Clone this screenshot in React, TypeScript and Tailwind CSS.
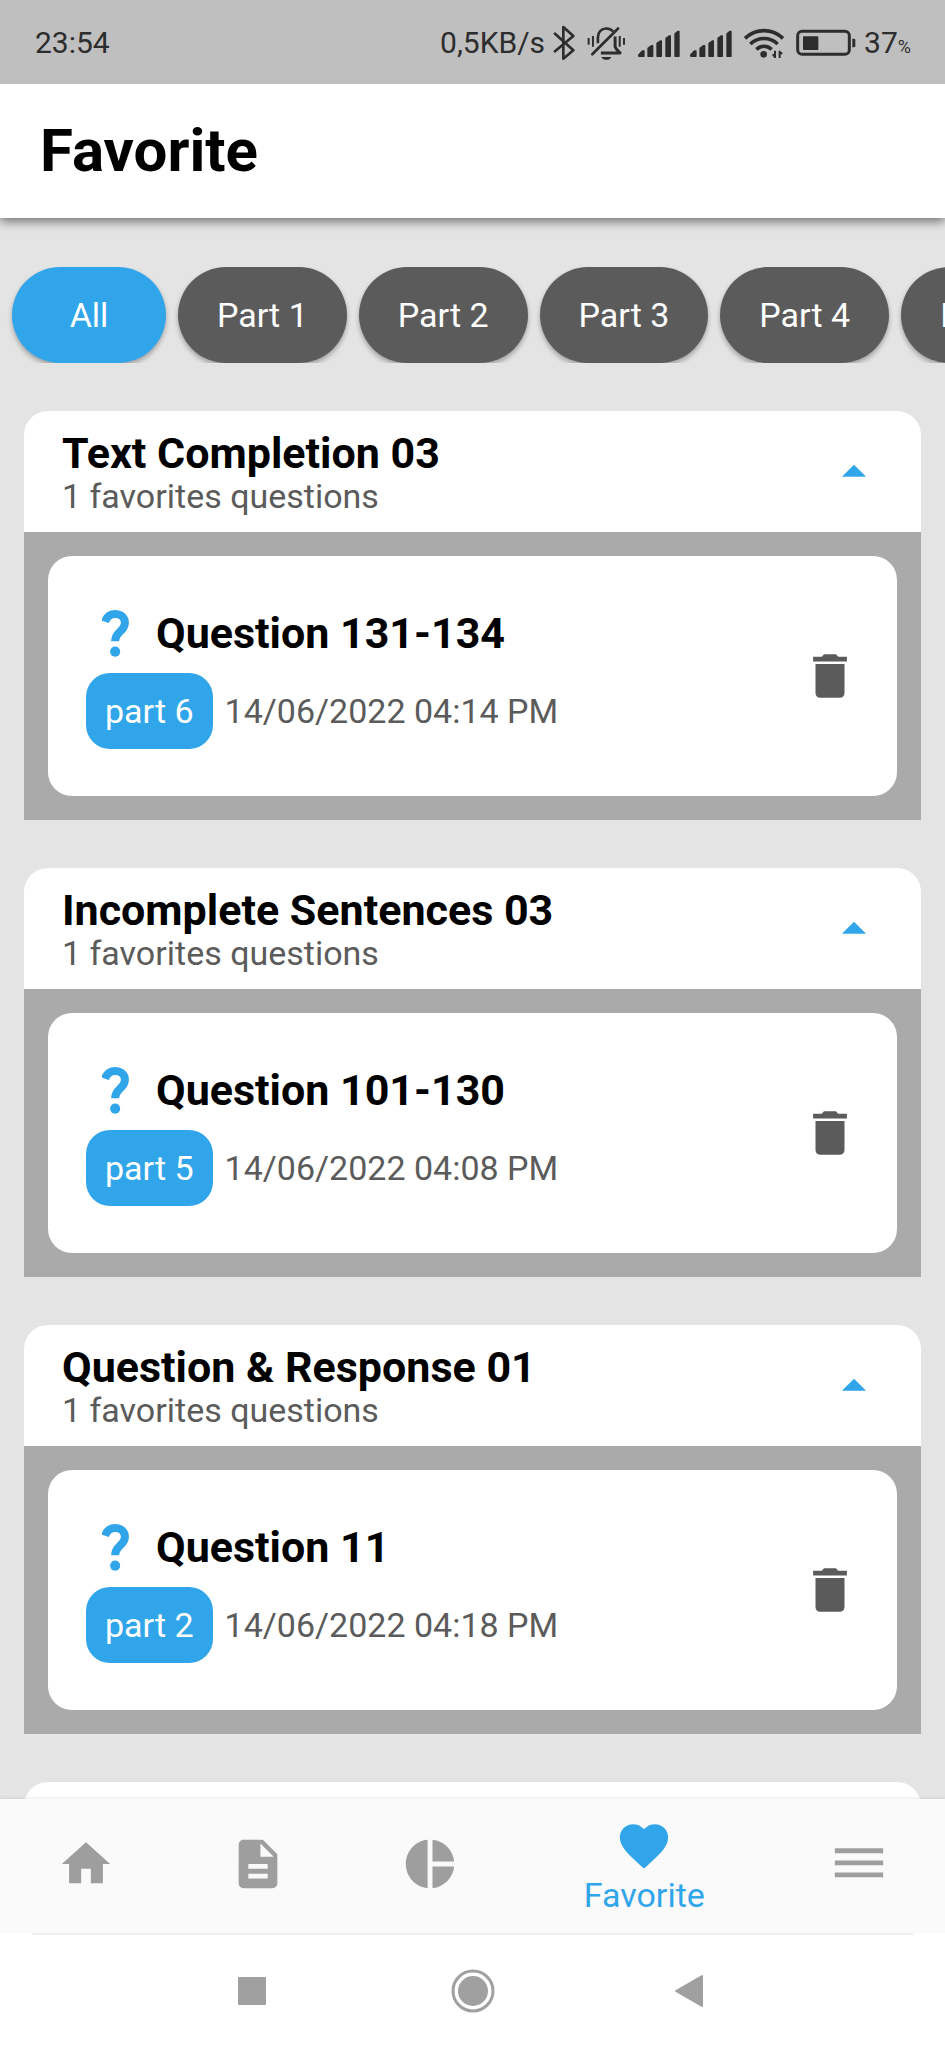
import { useState } from "react";
import type { ReactNode } from "react";
import { MdArrowDropUp, MdDescription, MdFavorite, MdHome, MdPieChart } from "react-icons/md";

type FavoriteGroup = {
  title: string;
  question: string;
  part: string;
  date: string;
};

const filters = ["All", "Part 1", "Part 2", "Part 3", "Part 4", "Part 5"];

const groups: FavoriteGroup[] = [
  { title: "Text Completion 03", question: "Question 131-134", part: "part 6", date: "14/06/2022 04:14 PM" },
  { title: "Incomplete Sentences 03", question: "Question 101-130", part: "part 5", date: "14/06/2022 04:08 PM" },
  { title: "Question & Response 01", question: "Question 11", part: "part 2", date: "14/06/2022 04:18 PM" },
];

function BluetoothIcon() {
  return (
    <svg viewBox="0 0 66 108" className="h-9 w-[22px]" fill="none" stroke="currentColor" strokeWidth="8" strokeLinecap="round" strokeLinejoin="round" aria-hidden="true">
      <path d="M6 26 61 76 31 101V6L61 33 6 79" />
    </svg>
  );
}

function MutedBellIcon() {
  return (
    <svg viewBox="0 0 118 108" className="h-9 w-[39px]" fill="none" stroke="currentColor" strokeWidth="8" aria-hidden="true">
      <path d="M5 39v20M18 33v32M99 33v32M112 39v20" strokeWidth="6" />
      <path d="M33 55V37C33 20 44 10 58 10c9 0 16 3 21 9" />
      <path d="M94 10 16 88" strokeLinecap="round" />
      <path d="M85 34v30c0 6 4 9 15 20H42" strokeWidth="9" strokeLinejoin="round" />
      <path d="M43 96h31c-4 6-8 9-15.500 9S47 102 43 96z" fill="currentColor" stroke="none" />
    </svg>
  );
}

function SignalIcon() {
  return (
    <svg viewBox="0 0 126 108" className="h-9 w-[42px]" fill="currentColor" stroke="currentColor" strokeWidth="4" strokeLinejoin="round" aria-hidden="true">
      <path d="M2 90 13 78h5v16H3zM30 70l10-8h4v32H30zM57 55l10-7h3v46H57zM84 40l9-7h4v61H84zM111 26l9-7h3v75h-12z" />
    </svg>
  );
}

function WifiIcon() {
  return (
    <svg viewBox="0 0 120 108" className="h-9 w-10" fill="none" stroke="currentColor" strokeWidth="11" aria-hidden="true">
      <path d="M3 40C36 9 84 9 117 40" />
      <path d="M19 57c24-22 58-22 82 0" />
      <path d="M37 73c14-12 32-12 46 0" />
      <circle cx="59" cy="88" r="10" fill="currentColor" stroke="none" />
      <path d="M93 77v22M107 77v22M86 88l7 8M114 87l-7-8" strokeWidth="6" />
    </svg>
  );
}

function BatteryIcon() {
  return (
    <svg viewBox="0 0 180 108" className="h-9 w-[60px]" fill="none" aria-hidden="true">
      <rect x="5" y="19" width="155" height="69" rx="13" stroke="currentColor" strokeWidth="9" />
      <rect x="21" y="34" width="46" height="41" rx="2" fill="currentColor" />
      <path d="M169 41h5q4 0 4 4v18q0 4-4 4h-5z" fill="currentColor" />
    </svg>
  );
}

function QuestionMarkIcon() {
  return (
    <svg viewBox="0 0 80 140" className="h-[47px] w-[27px]" fill="none" aria-hidden="true">
      <path d="M9 35C14 20 25 12 39 12c17 0 29 11 29 26 0 26-29 26-29 55" stroke="currentColor" strokeWidth="24" />
      <circle cx="39" cy="124" r="15" fill="currentColor" />
    </svg>
  );
}

function TrashIcon() {
  return (
    <svg viewBox="0 0 24 24" className="size-[58px]" fill="currentColor" aria-hidden="true">
      <path d="M5 4h3.500C9.200 3.800 9 3 9.900 3h4.200c.9 0 .7.8 1.400 1H19v2H5zM6 7h12v12c0 1.200-.8 2-2 2H8c-1.200 0-2-.8-2-2z" />
    </svg>
  );
}

function MenuIcon() {
  return (
    <svg viewBox="0 0 24 24" className="size-[58px]" fill="currentColor" aria-hidden="true">
      <path d="M2 5.500h20v2H2zM2 10.500h20v2H2zM2 15.500h20v2H2z" />
    </svg>
  );
}

function StatusBar() {
  return (
    <div className="z-20 flex h-[84px] shrink-0 items-center justify-between bg-[#bfbfbf] pt-[2px] pr-[34px] pl-[35px] text-[30px] leading-9 text-[#2d2d2d]">
      <span>23:54</span>
      <div className="flex items-center">
        <span>0,5KB/s</span>
        <div className="mr-2 ml-2 flex items-center gap-3">
          <BluetoothIcon />
          <MutedBellIcon />
          <div className="flex gap-[10px]">
            <SignalIcon />
            <SignalIcon />
          </div>
          <WifiIcon />
          <BatteryIcon />
        </div>
        <div className="flex items-baseline">
          <span>37</span>
          <span className="text-[18px] leading-none">%</span>
        </div>
      </div>
    </div>
  );
}

function GroupCard({ group }: { group: FavoriteGroup }) {
  const [open, setOpen] = useState(true);
  return (
    <section>
      <div className="flex h-[121px] items-center justify-between rounded-t-3xl bg-white px-[38px]">
        <div>
          <h2 className="text-[43px] leading-[52px] font-bold text-black">{group.title}</h2>
          <p className="pb-1 text-[34px] leading-[34px] text-[#5b5b5b]">1 favorites questions</p>
        </div>
        <button type="button" aria-label="Toggle questions" aria-expanded={open} onClick={() => setOpen(!open)} className="text-[#31a5ea]">
          <MdArrowDropUp className={open ? "size-[58px]" : "size-[58px] rotate-180"} />
        </button>
      </div>
      {open && (
        <div className="bg-[#aaaaaa] p-6">
          <div className="flex items-center justify-between rounded-3xl bg-white px-[38px]">
            <div className="pt-[38px] pb-[47px]">
              <div className="flex h-[79px] items-center gap-3">
                <div className="flex w-[58px] justify-center text-[#31a5ea]">
                  <QuestionMarkIcon />
                </div>
                <h3 className="pb-[2px] text-[43px] leading-[50px] font-bold text-black">{group.question}</h3>
              </div>
              <div className="flex items-center gap-3 text-[34px] leading-10">
                <span className="rounded-3xl bg-[#31a5ea] px-[19px] py-[18px] text-white">{group.part}</span>
                <span className="text-[#5b5b5b]">{group.date}</span>
              </div>
            </div>
            <button type="button" aria-label="Delete favorite" className="text-[#5b5b5b]">
              <TrashIcon />
            </button>
          </div>
        </div>
      )}
    </section>
  );
}

function NavTab({ label, children }: { label: string; children: ReactNode }) {
  return (
    <a href="#" aria-label={label} className="flex flex-[2] items-center justify-center pb-1 text-[#9e9e9e]">
      {children}
    </a>
  );
}

export default function App() {
  const [filter, setFilter] = useState("All");
  return (
    <div className="flex h-screen flex-col overflow-hidden bg-[#e4e4e4] font-['Roboto',sans-serif]">
      <StatusBar />
      <header className="z-10 shrink-0 bg-white px-10 pt-[31px] pb-[31px] shadow-[0_3px_10px_rgba(0,0,0,0.55)]">
        <h1 className="text-[60px] leading-[72px] font-bold text-black">Favorite</h1>
      </header>

      <main className="min-h-0 flex-1 overflow-y-auto pt-[49px] [scrollbar-width:none]">
        <div className="flex gap-3 overflow-x-auto px-3 [scrollbar-width:none]">
          {filters.map((name) => (
            <button
              key={name}
              type="button"
              aria-pressed={filter === name}
              onClick={() => setFilter(name)}
              className={
                filter === name
                  ? "h-24 min-w-[154px] shrink-0 rounded-full bg-[#31a5ea] px-[39px] text-[34px] leading-10 text-white shadow-[0_3px_5px_rgba(0,0,0,0.3)]"
                  : "h-24 min-w-[154px] shrink-0 rounded-full bg-[#5b5b5b] px-[39px] text-[34px] leading-10 text-white shadow-[0_3px_5px_rgba(0,0,0,0.3)]"
              }
            >
              {name}
            </button>
          ))}
        </div>
        <div className="flex flex-col gap-12 px-6 py-12">
          {groups.map((group) => (
            <GroupCard key={group.title} group={group} />
          ))}
          <div className="h-[121px] rounded-t-3xl bg-white" />
        </div>
      </main>

      <nav className="z-10 flex h-[134px] shrink-0 bg-[#fafafa] shadow-[0_0_4px_rgba(0,0,0,0.12)]">
        <NavTab label="Home">
          <MdHome className="size-[58px]" />
        </NavTab>
        <NavTab label="Tests">
          <MdDescription className="size-[58px]" />
        </NavTab>
        <NavTab label="Statistics">
          <MdPieChart className="size-[58px]" />
        </NavTab>
        <a href="#" aria-current="page" className="flex flex-[3] flex-col items-center justify-center text-[34px] leading-10 text-[#31a5ea]">
          <MdFavorite className="size-[58px]" />
          Favorite
        </a>
        <NavTab label="Menu">
          <MenuIcon />
        </NavTab>
      </nav>

      <div className="z-10 shrink-0 bg-white px-8">
        <div className="h-[2px] bg-[#eeeeee]" />
        <div className="flex h-[113px] items-center justify-center gap-[177px] pb-[2px] text-[#a0a0a0]">
          <button type="button" aria-label="Recent apps">
            <svg viewBox="0 0 44 44" className="size-11" fill="currentColor" aria-hidden="true">
              <rect x="8" y="8" width="28" height="28" rx="1" />
            </svg>
          </button>
          <button type="button" aria-label="Home screen">
            <svg viewBox="0 0 44 44" className="size-11" aria-hidden="true">
              <circle cx="22" cy="22" r="20" fill="none" stroke="currentColor" strokeWidth="3" />
              <circle cx="22" cy="22" r="15" fill="currentColor" />
            </svg>
          </button>
          <button type="button" aria-label="Back">
            <svg viewBox="0 0 44 44" className="size-11" fill="currentColor" stroke="currentColor" strokeWidth="2" strokeLinejoin="round" aria-hidden="true">
              <path d="M4 22 30 7v30z" />
            </svg>
          </button>
        </div>
      </div>
    </div>
  );
}
